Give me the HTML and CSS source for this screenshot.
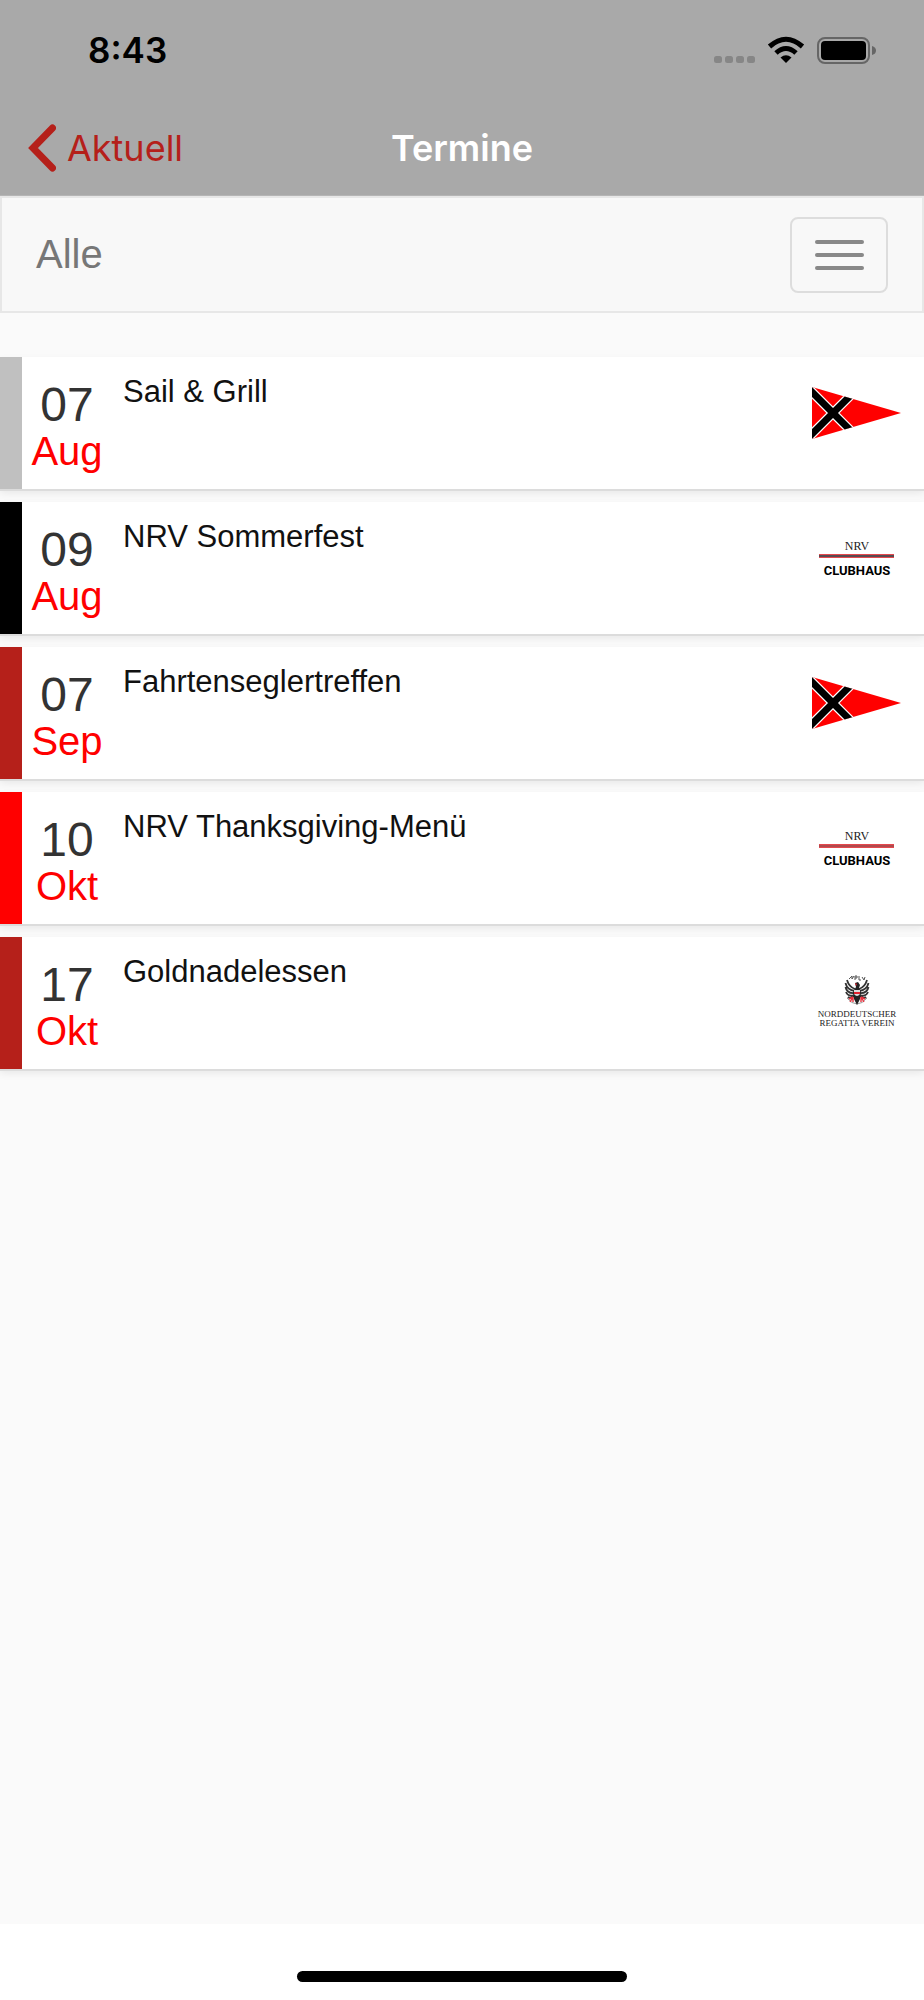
FILE: index.html
```html
<!DOCTYPE html>
<html lang="de">
<head>
    <meta charset="UTF-8">
    <meta name="viewport" content="width=device-width, initial-scale=1.0">
    <title>Termine</title>
    <link rel="stylesheet" href="styles.css">
</head>
<body>
    <header class="header">
        <div class="status-bar">
            <span class="time">8:43</span>
            <svg class="status-icons" viewBox="0 0 164 30" aria-hidden="true">
                <g fill="#868686">
                    <rect x="0" y="21" width="8" height="7" rx="2.500"/>
                    <rect x="11" y="21" width="8" height="7" rx="2.500"/>
                    <rect x="22" y="21" width="8" height="7" rx="2.500"/>
                    <rect x="33" y="21" width="8" height="7" rx="2.500"/>
                </g>
                <g fill="none" stroke="#000" stroke-width="5">
                    <path d="M55.500 11.500 Q72 -3 88.500 11.500"/>
                    <path d="M62 18 Q72 9 82 18"/>
                </g>
                <path d="M66.500 22.500 Q72 18 77.500 22.500 L72 28 Z" fill="#000"/>
                <rect x="104" y="3" width="51" height="25" rx="7" fill="none" stroke="#666" stroke-width="2"/>
                <rect x="107" y="6" width="45" height="19" rx="4" fill="#000"/>
                <path d="M158 11 Q162 12 162 15.500 Q162 19 158 20 Z" fill="#666"/>
            </svg>
        </div>
        <nav class="nav-bar">
            <a href="#" class="back">
                <svg class="back-icon" viewBox="0 0 28 48" aria-hidden="true">
                    <path d="M24.500 4 L5 24 L24.500 44" fill="none" stroke="#b5201a" stroke-width="7" stroke-linecap="round"/>
                </svg>
                Aktuell
            </a>
            <h1>Termine</h1>
        </nav>
    </header>

    <div class="filter">
        <span class="filter-label">Alle</span>
        <button type="button" class="menu-toggle" aria-label="Filter">
            <span></span>
            <span></span>
            <span></span>
        </button>
    </div>

    <ul class="events">
        <li class="event grey">
            <div class="date"><span class="day">07</span><span class="month">Aug</span></div>
            <h2>Sail &amp; Grill</h2>
            <svg class="logo" viewBox="0 0 90 90">
                <clipPath id="pennant"><path d="M0 18 L89 44 L0 70 Z"/></clipPath>
                <g id="flag" clip-path="url(#pennant)">
                    <rect width="90" height="90" fill="#f00"/>
                    <path d="M-8 15 L46 69 M-8 73 L46 19" stroke="#fff" stroke-width="9.500"/>
                    <path d="M-8 15 L46 69 M-8 73 L46 19" stroke="#000" stroke-width="7"/>
                </g>
            </svg>
        </li>
        <li class="event black">
            <div class="date"><span class="day">09</span><span class="month">Aug</span></div>
            <h2>NRV Sommerfest</h2>
            <svg class="logo" viewBox="0 0 90 90">
                <text class="logo-nrv" x="45" y="36">NRV</text>
                <rect x="7" y="40" width="75" height="4" fill="#e5484d"/>
                <rect x="7" y="41" width="75" height="2" fill="#5a4a50"/>
                <text class="logo-club" x="45" y="61">CLUBHAUS</text>
            </svg>
        </li>
        <li class="event darkred">
            <div class="date"><span class="day">07</span><span class="month">Sep</span></div>
            <h2>Fahrtenseglertreffen</h2>
            <svg class="logo" viewBox="0 0 90 90"><use href="#flag"/></svg>
        </li>
        <li class="event red">
            <div class="date"><span class="day">10</span><span class="month">Okt</span></div>
            <h2>NRV Thanksgiving-Menü</h2>
            <svg class="logo" viewBox="0 0 90 90">
                <text class="logo-nrv" x="45" y="36">NRV</text>
                <rect x="7" y="40" width="75" height="4" fill="#e5484d"/>
                <rect x="7" y="41" width="75" height="2" fill="#b04a4e"/>
                <text class="logo-club" x="45" y="61">CLUBHAUS</text>
            </svg>
        </li>
        <li class="event darkred">
            <div class="date"><span class="day">17</span><span class="month">Okt</span></div>
            <h2>Goldnadelessen</h2>
            <svg class="logo" viewBox="0 0 90 90">
                <path d="M35 49 Q45 61 55 49" fill="none" stroke="#999" stroke-width="1"/>
                <!-- wings -->
                <g fill="none" stroke="#333" stroke-width="1.800">
                    <path d="M43 40 Q37 38 35 31 M43 42 Q35 41 33.500 34 M43 44 Q35 45 33.500 38 M42 46 Q36 48 34 43 M42 47 Q38 50 36 48"/>
                    <path d="M47 40 Q53 38 55 31 M47 42 Q55 41 56.500 34 M47 44 Q55 45 56.500 38 M48 46 Q54 48 56 43 M48 47 Q52 50 54 48"/>
                </g>
                <!-- body, shield and claws -->
                <path d="M43 34 L46 33 L48 36 L47 39 L49 43 L48 50 L45 56 L42 50 L41 43 L44 38 Z" fill="#222"/>
                <path d="M42 41 H48 V45 Q45 49 42 45 Z" fill="#ddd"/>
                <path d="M42 43 H48 V45 H42 Z M43 34 L45 35 L44 37 Z" fill="#e3202c"/>
                <path d="M41 48 L37 50 M41 48 L38 53 M41 48 L41 53 M49 48 L53 50 M49 48 L52 53 M49 48 L49 53" stroke="#e8303c" stroke-width="1.400"/>
                <path d="M37 30 L40 27 L40 30 L42 27 M43 31 V27 H45 V29 H43 M47 27 V31 H49 M50 28 L52 31 L53 28" fill="none" stroke="#555" stroke-width="1"/>
                <text class="logo-name" x="45" y="68">NORDDEUTSCHER</text>
                <text class="logo-name" x="45" y="77">REGATTA VEREIN</text>
            </svg>
        </li>
    </ul>

    <footer class="home-bar">
        <div class="home-indicator"></div>
    </footer>
</body>
</html>
```
FILE: styles.css
```css
* {
    box-sizing: border-box;
    margin: 0;
    padding: 0;
}

body {
    display: flex;
    flex-direction: column;
    min-height: 100vh;
    font-family: "Liberation Sans", Arial, sans-serif;
    background-color: #fafafa;
    color: #333;
}

/* Header */
.header {
    background-color: #a9a9a9;
    font-family: Inter, sans-serif;
    border-bottom: 1px solid #b5b5b5;
}

.status-bar {
    display: flex;
    justify-content: space-between;
    align-items: center;
    height: 100px;
    padding: 0 46px 0 88px;
}

.time {
    font-size: 35px;
    font-weight: 600;
    color: #000;
}

.status-icons {
    width: 164px;
    height: 30px;
}

.nav-bar {
    display: grid;
    grid-template-columns: 1fr auto 1fr;
    align-items: center;
    height: 95px;
    padding: 0 28px;
}

.back {
    display: flex;
    align-items: center;
    gap: 11px;
    font-size: 36px;
    color: #b5201a;
    text-decoration: none;
}

.back-icon {
    width: 28px;
    height: 48px;
}

h1 {
    font-size: 36px;
    font-weight: 600;
    color: #fff;
}

/* Filter */
.filter {
    display: flex;
    justify-content: space-between;
    align-items: center;
    height: 117px;
    padding: 0 34px;
    border: 2px solid #e7e7e7;
    background-color: #f8f8f8;
}

.filter-label {
    font-size: 40px;
    color: #777;
}

.menu-toggle {
    display: flex;
    flex-direction: column;
    justify-content: center;
    align-items: center;
    gap: 9px;
    width: 98px;
    height: 76px;
    border: 2px solid #ddd;
    border-radius: 8px;
    background-color: transparent;
    cursor: pointer;
}

.menu-toggle span {
    width: 49px;
    height: 4px;
    border-radius: 2px;
    background-color: #888;
}

/* Events */
.events {
    display: flex;
    flex-direction: column;
    gap: 13px;
    flex: 1;
    padding: 44px 0;
    list-style: none;
}

.event {
    display: flex;
    min-height: 132px;
    padding-right: 22px;
    border-left: 22px solid;
    background-color: #fff;
    box-shadow: 0 2px 0 #dcdcdc, 0 4px 8px rgba(0, 0, 0, 0.08);
}

.grey {
    border-color: #c0c0c0;
}

.black {
    border-color: #000;
}

.darkred {
    border-color: #b5201a;
}

.red {
    border-color: #f00;
}

.date {
    display: flex;
    flex-direction: column;
    align-items: center;
    width: 90px;
    padding-top: 23px;
}

.day {
    font-size: 48px;
    line-height: 50px;
}

.month {
    font-size: 40px;
    line-height: 42px;
    color: #f00;
}

h2 {
    flex: 1;
    padding: 17px 0 0 11px;
    font-size: 31px;
    line-height: 36px;
    font-weight: 400;
    color: #111;
}

.logo {
    width: 90px;
    height: 90px;
    margin-top: 12px;
}

.logo-nrv,
.logo-club,
.logo-name {
    text-anchor: middle;
    fill: #222;
}

.logo-nrv {
    font-family: "Liberation Serif", serif;
    font-size: 12px;
}

.logo-club {
    font-family: Roboto, sans-serif;
    font-size: 13px;
    font-weight: 700;
    fill: #000;
}

.logo-name {
    font-family: "Liberation Serif", serif;
    font-size: 9px;
}

/* Home indicator */
.home-bar {
    display: flex;
    justify-content: center;
    align-items: flex-end;
    height: 76px;
    padding-bottom: 18px;
    background-color: #fff;
}

.home-indicator {
    width: 330px;
    height: 11px;
    border-radius: 6px;
    background-color: #000;
}
```
